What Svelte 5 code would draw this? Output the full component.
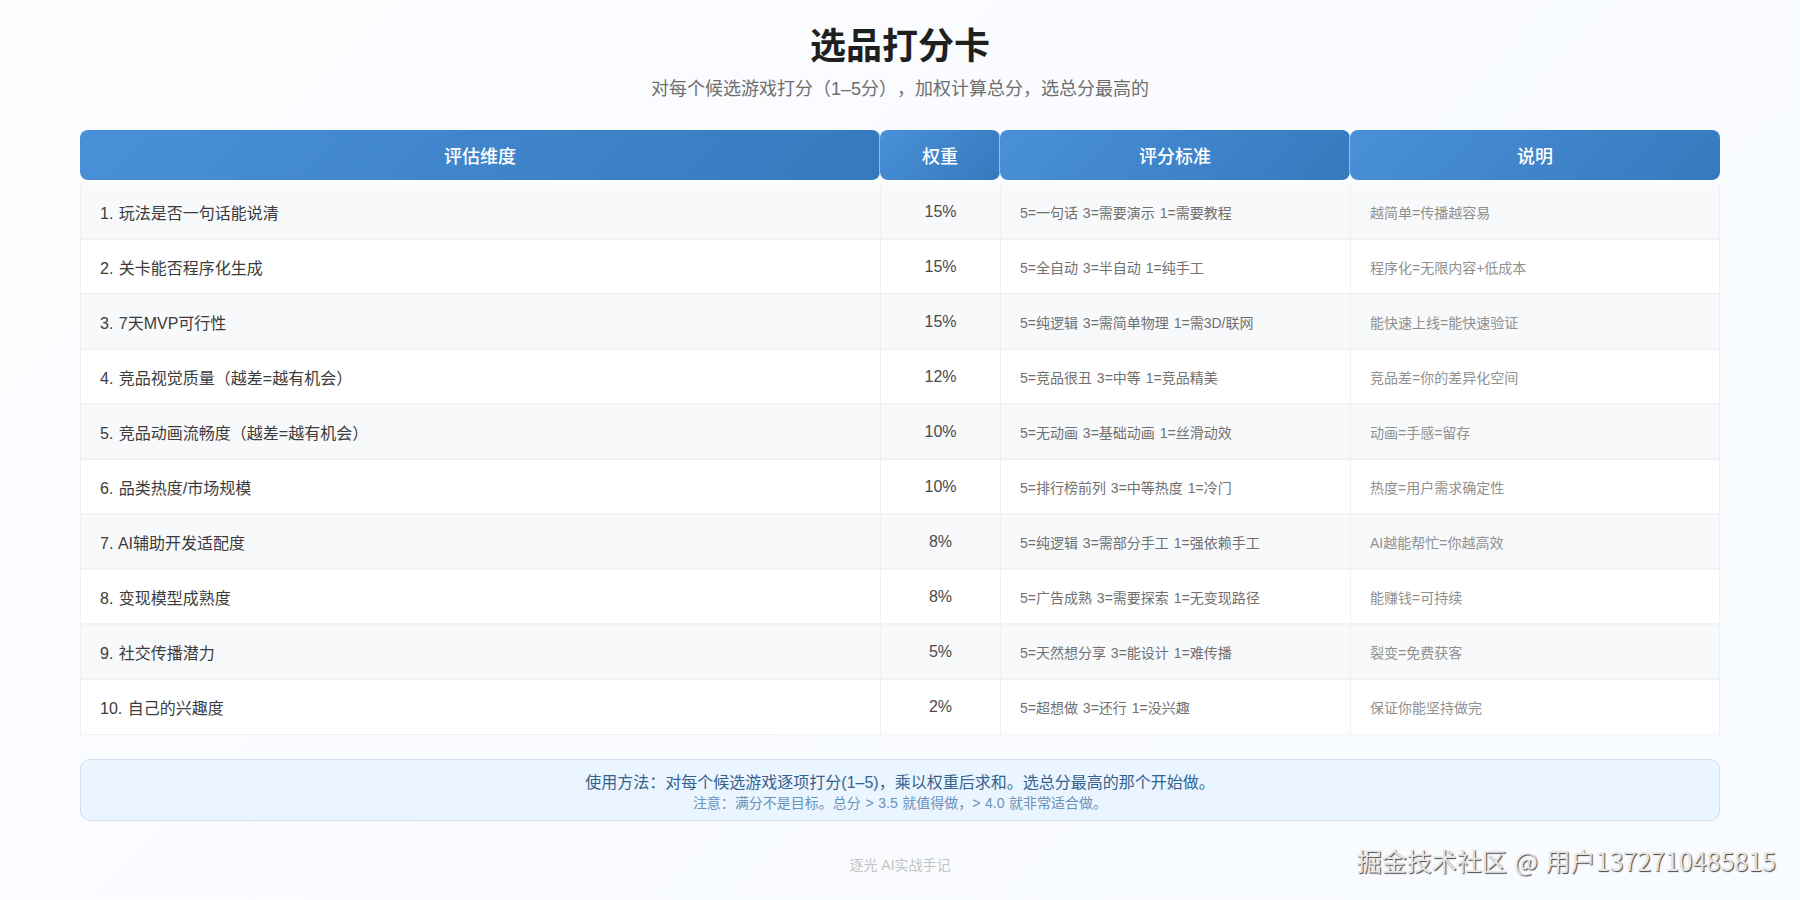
<script>
  const rows = [
    ["1. 玩法是否一句话能说清", "15%", "5=一句话 3=需要演示 1=需要教程", "越简单=传播越容易"],
    ["2. 关卡能否程序化生成", "15%", "5=全自动 3=半自动 1=纯手工", "程序化=无限内容+低成本"],
    ["3. 7天MVP可行性", "15%", "5=纯逻辑 3=需简单物理 1=需3D/联网", "能快速上线=能快速验证"],
    ["4. 竞品视觉质量（越差=越有机会）", "12%", "5=竞品很丑 3=中等 1=竞品精美", "竞品差=你的差异化空间"],
    ["5. 竞品动画流畅度（越差=越有机会）", "10%", "5=无动画 3=基础动画 1=丝滑动效", "动画=手感=留存"],
    ["6. 品类热度/市场规模", "10%", "5=排行榜前列 3=中等热度 1=冷门", "热度=用户需求确定性"],
    ["7. AI辅助开发适配度", "8%", "5=纯逻辑 3=需部分手工 1=强依赖手工", "AI越能帮忙=你越高效"],
    ["8. 变现模型成熟度", "8%", "5=广告成熟 3=需要探索 1=无变现路径", "能赚钱=可持续"],
    ["9. 社交传播潜力", "5%", "5=天然想分享 3=能设计 1=难传播", "裂变=免费获客"],
    ["10. 自己的兴趣度", "2%", "5=超想做 3=还行 1=没兴趣", "保证你能坚持做完"],
  ];
</script>

<div class="page">
  <h1>选品打分卡</h1>
  <p class="subtitle">对每个候选游戏打分（1–5分），加权计算总分，选总分最高的</p>

  <table>
    <colgroup>
      <col style="width: 800px" />
      <col style="width: 120px" />
      <col style="width: 350px" />
      <col style="width: 370px" />
    </colgroup>
    <thead>
      <tr>
        <th>评估维度</th>
        <th>权重</th>
        <th>评分标准</th>
        <th>说明</th>
      </tr>
    </thead>
    <tbody>
      {#each rows as row}
        <tr>
          <td class="name">{row[0]}</td>
          <td class="weight">{row[1]}</td>
          <td class="rule">{row[2]}</td>
          <td class="desc">{row[3]}</td>
        </tr>
      {/each}
    </tbody>
  </table>

  <div class="note">
    <div class="main">使用方法：对每个候选游戏逐项打分(1–5)，乘以权重后求和。选总分最高的那个开始做。</div>
    <div class="sub">注意：满分不是目标。总分 &gt; 3.5 就值得做，&gt; 4.0 就非常适合做。</div>
  </div>

  <div class="footer">逐光 AI实战手记</div>
  <div class="watermark">掘金技术社区 @ 用户1372710485815</div>
</div>

<style>
  :global(body) {
    margin: 0;
    background: #fafcff;
  }

  .page {
    position: relative;
    height: 900px;
    box-sizing: border-box;
    padding: 25px 80px 0;
    overflow: hidden;
    background: linear-gradient(135deg, #fbfcfe 0%, #f8fbff 100%);
    font-family: "Liberation Sans", "Noto Sans CJK SC", sans-serif;
    text-spacing-trim: space-all;
    text-align: center;
  }

  h1 {
    margin: 0;
    font-size: 36px;
    line-height: 44px;
    font-weight: 700;
    color: #1f1f1f;
  }

  .subtitle {
    margin: 7px 0 0;
    font-size: 18px;
    line-height: 26px;
    color: #6e6e6e;
  }

  table {
    width: 1640px;
    margin-top: 28px;
    border-collapse: separate;
    border-spacing: 0;
    table-layout: fixed;
  }

  thead::after {
    content: "";
    display: block;
    height: 5px;
  }

  th {
    height: 50px;
    padding: 0;
    border-radius: 8px;
    background: linear-gradient(135deg, #4a90d9, #357abd);
    color: #fff;
    font-size: 18px;
    font-weight: 500;
    box-shadow: 0 0 0 0.5px #fff;
  }

  td {
    height: 55px;
    box-sizing: border-box;
    padding: 0 19px;
    background: #fff;
    border-left: 1px solid #eff0f2;
    border-bottom: 2px solid #f0f2f4;
    text-align: left;
  }

  td:last-child {
    border-right: 1px solid #eff0f2;
  }

  tbody tr:nth-child(odd) td {
    background: #f8f9fb;
  }

  tbody tr:last-child td {
    border-bottom-width: 1px;
  }

  .name {
    font-size: 16px;
    word-spacing: 1px;
    color: #3c3c3c;
  }

  .weight {
    padding: 0;
    font-size: 16px;
    color: #4a4a4a;
    text-align: center;
  }

  .rule {
    font-size: 14px;
    word-spacing: 1px;
    color: #707070;
  }

  .desc {
    font-size: 14px;
    color: #909090;
  }

  .note {
    box-sizing: border-box;
    height: 62px;
    margin-top: 24px;
    padding-top: 13px;
    border: 1px solid #cfdff0;
    border-radius: 10px;
    background: #ebf5ff;
  }

  .main {
    font-size: 16px;
    line-height: 20px;
    color: #34628f;
  }

  .sub {
    margin-top: 2px;
    font-size: 14px;
    line-height: 17px;
    word-spacing: 0.7px;
    color: #6a92bb;
  }

  .footer {
    margin-top: 35px;
    font-size: 14px;
    line-height: 18px;
    color: #c4c4c4;
  }

  .watermark {
    position: absolute;
    right: 24px;
    top: 843px;
    font-family: "Noto Sans CJK SC", sans-serif;
    font-size: 25px;
    line-height: 34px;
    word-spacing: 2px;
    white-space: nowrap;
    color: #e6e6e6;
    text-shadow: 1px 1px 1px #444;
  }
</style>
